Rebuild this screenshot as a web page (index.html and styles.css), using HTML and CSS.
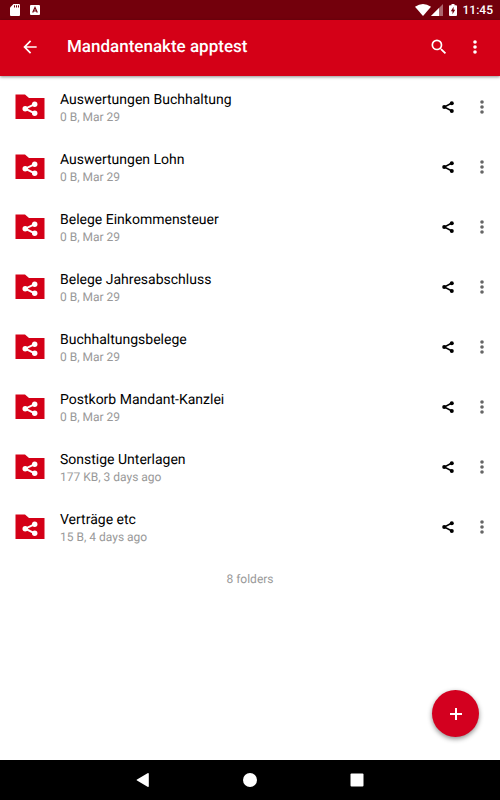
FILE: index.html
```
<!DOCTYPE html>
<html lang="de">
<head>
<meta charset="utf-8">
<meta name="viewport" content="width=device-width, initial-scale=1">
<title>Mandantenakte apptest</title>
<link rel="stylesheet" href="styles.css">
</head>
<body>
<svg class="defs" aria-hidden="true">
  <symbol id="more" viewBox="0 0 20 20"><circle cx="10" cy="5" r="1.8"/><circle cx="10" cy="10" r="1.8"/><circle cx="10" cy="15" r="1.8"/></symbol>
  <symbol id="share" viewBox="0 0 20 20"><path d="M14 6 6.200 10 14 14" fill="none" stroke="currentColor" stroke-width="1.500"/><circle cx="6.200" cy="10" r="2"/><circle cx="13.800" cy="6.200" r="2"/><circle cx="13.800" cy="13.900" r="2"/></symbol>
  <symbol id="folder" viewBox="0 0 30 26"><path fill="#d40017" d="M.5.500H10l4 3.500h15.500v21H.5z"/><path d="M19.800 10.200 10.300 14.700l9.500 4.600" fill="none" stroke="#fff" stroke-width="2"/><g fill="#fff"><circle cx="10.200" cy="14.700" r="2.700"/><circle cx="19.700" cy="10.300" r="2.700"/><circle cx="19.700" cy="19.300" r="2.700"/></g></symbol>
</svg>
<div class="app">
  <div class="status">
    <div class="group">
      <svg width="10" height="12" viewBox="0 0 10 12"><path fill="#fff" d="M3.500 0H9q1 0 1 1v10q0 1-1 1H1q-1 0-1-1V3.500z"/><path stroke="#73000c" stroke-width="1" d="M4.500 1.300v2.200M6.500 1.300v2.200M8.500 1.300v2.200"/></svg>
      <svg width="10" height="10" viewBox="0 0 10 10"><rect width="10" height="10" rx="1" fill="#fff"/><path fill="none" stroke="#73000c" stroke-width="1.200" d="M2.700 7.500 5 2.500l2.300 5M3.500 6h3"/></svg>
    </div>
    <div class="group right">
      <div class="signals">
        <svg width="16" height="12" viewBox="0 0 16 12"><path fill="#fff" d="M0 2.800Q8-2.600 16 2.800L8 12z"/></svg>
        <svg width="12" height="12" viewBox="0 0 12 12"><path fill="#fff" opacity=".4" d="M12 0v12H0z"/><path fill="#fff" d="M8 4v8H0z"/></svg>
      </div>
      <svg width="8" height="12" viewBox="0 0 8 12"><path fill="#fff" d="M2.500 0h3v1.200H7q1 0 1 1V11q0 1-1 1H1q-1 0-1-1V2.200q0-1 1-1h1.500z"/><path fill="#73000c" d="M4.600 2.800 1.800 7.200h1.700v3l2.700-4.400H4.600z"/></svg>
      <span class="time">11:45</span>
    </div>
  </div>
  <header class="bar">
    <button class="icon" aria-label="Back"><svg width="20" height="20" viewBox="0 0 24 24"><path d="M20 11H7.830l5.590-5.590L12 4l-8 8 8 8 1.410-1.410L7.830 13H20z"/></svg></button>
    <h1>Mandantenakte apptest</h1>
    <button class="icon" aria-label="Search"><svg width="20" height="20" viewBox="0 0 24 24"><path d="M15.500 14h-.79l-.28-.27A6.471 6.471 0 0 0 16 9.500 6.500 6.500 0 1 0 9.500 16c1.610 0 3.090-.59 4.230-1.570l.27.28v.79l5 4.990L20.490 19zm-6 0C7.010 14 5 11.990 5 9.500S7.010 5 9.500 5 14 7.010 14 9.500 11.990 14 9.500 14z"/></svg></button>
    <button class="icon" aria-label="More options"><svg width="20" height="20"><use href="#more"/></svg></button>
  </header>
  <main>
    <ul class="list">
      <li><svg class="folder"><use href="#folder"/></svg><div class="text"><p class="name">Auswertungen Buchhaltung</p><p class="meta">0 B, Mar 29</p></div><button class="act" aria-label="Share"><svg><use href="#share"/></svg></button><button class="act dots" aria-label="More"><svg><use href="#more"/></svg></button></li>
      <li><svg class="folder"><use href="#folder"/></svg><div class="text"><p class="name">Auswertungen Lohn</p><p class="meta">0 B, Mar 29</p></div><button class="act" aria-label="Share"><svg><use href="#share"/></svg></button><button class="act dots" aria-label="More"><svg><use href="#more"/></svg></button></li>
      <li><svg class="folder"><use href="#folder"/></svg><div class="text"><p class="name">Belege Einkommensteuer</p><p class="meta">0 B, Mar 29</p></div><button class="act" aria-label="Share"><svg><use href="#share"/></svg></button><button class="act dots" aria-label="More"><svg><use href="#more"/></svg></button></li>
      <li><svg class="folder"><use href="#folder"/></svg><div class="text"><p class="name">Belege Jahresabschluss</p><p class="meta">0 B, Mar 29</p></div><button class="act" aria-label="Share"><svg><use href="#share"/></svg></button><button class="act dots" aria-label="More"><svg><use href="#more"/></svg></button></li>
      <li><svg class="folder"><use href="#folder"/></svg><div class="text"><p class="name">Buchhaltungsbelege</p><p class="meta">0 B, Mar 29</p></div><button class="act" aria-label="Share"><svg><use href="#share"/></svg></button><button class="act dots" aria-label="More"><svg><use href="#more"/></svg></button></li>
      <li><svg class="folder"><use href="#folder"/></svg><div class="text"><p class="name">Postkorb Mandant-Kanzlei</p><p class="meta">0 B, Mar 29</p></div><button class="act" aria-label="Share"><svg><use href="#share"/></svg></button><button class="act dots" aria-label="More"><svg><use href="#more"/></svg></button></li>
      <li><svg class="folder"><use href="#folder"/></svg><div class="text"><p class="name">Sonstige Unterlagen</p><p class="meta">177 KB, 3 days ago</p></div><button class="act" aria-label="Share"><svg><use href="#share"/></svg></button><button class="act dots" aria-label="More"><svg><use href="#more"/></svg></button></li>
      <li><svg class="folder"><use href="#folder"/></svg><div class="text"><p class="name">Verträge etc</p><p class="meta">15 B, 4 days ago</p></div><button class="act" aria-label="Share"><svg><use href="#share"/></svg></button><button class="act dots" aria-label="More"><svg><use href="#more"/></svg></button></li>
    </ul>
    <p class="count">8 folders</p>
    <button class="fab" aria-label="Add"><svg width="20" height="20" viewBox="0 0 20 20"><path fill="none" stroke="#fff" stroke-width="2" d="M10 4v12M4 10h12"/></svg></button>
  </main>
  <nav class="sysnav" aria-label="System">
    <button aria-label="Back"><svg width="14" height="14" viewBox="0 0 14 14"><path d="M1 6.400 11.500.2q1.300-.5 1.300.8v12q0 1.300-1.300.8L1 7.600q-.8-.6 0-1.200z"/></svg></button>
    <button aria-label="Home"><svg width="14" height="14" viewBox="0 0 14 14"><circle cx="7" cy="7" r="7"/></svg></button>
    <button aria-label="Overview"><svg width="14" height="14" viewBox="0 0 14 14"><rect x=".5" y=".5" width="13" height="13" rx="1"/></svg></button>
  </nav>
</div>
</body>
</html>
```
FILE: styles.css
```
* { box-sizing: border-box; }
body { margin: 0; background: #fff; color: #000; font-family: Roboto, sans-serif; text-rendering: geometricPrecision; }
h1, p, ul { margin: 0; padding: 0; }
button { display: flex; align-items: center; justify-content: center; padding: 0; border: 0; background: none; color: inherit; }
svg { display: block; flex: none; fill: currentColor; }
.defs { position: absolute; width: 0; height: 0; }
.app { display: flex; flex-direction: column; min-height: 100vh; }

.status { display: flex; justify-content: space-between; align-items: center; height: 20px; padding: 0 7px 0 10px; background: #73000c; color: #fff; }
.group { display: flex; align-items: center; gap: 10px; }
.right { gap: 6px; }
.signals { display: flex; }
.time { font-size: 12px; line-height: 20px; font-weight: 500; }

.bar { display: flex; align-items: center; height: 56px; padding: 0 7px 2px 12px; background: #d40017; color: #fff; box-shadow: 0 1px 3px rgba(0, 0, 0, .45); }
.icon { width: 36px; height: 36px; }
.bar h1 { flex: 1; padding-left: 19px; font-size: 17px; line-height: 24px; font-weight: 500; }

main { position: relative; flex: 1; padding-top: 1px; }
.list { list-style: none; }
.list li { display: flex; align-items: center; height: 60px; padding: 0 1px 0 15px; }
.folder { width: 30px; height: 26px; }
.text { flex: 1; padding: 2px 0 0 15px; }
.name { font-size: 14px; line-height: 18px; }
.meta { font-size: 12px; line-height: 16px; color: #999; }
.act { width: 34px; height: 34px; }
.act svg { width: 20px; height: 20px; }
.dots { color: #666; }
.count { padding-top: 14px; font-size: 12px; line-height: 16px; color: #999; text-align: center; }
.fab { position: absolute; right: 21px; bottom: 23px; width: 47px; height: 47px; border-radius: 50%; background: #d3001f; box-shadow: 0 2px 5px rgba(0, 0, 0, .45); }

.sysnav { display: flex; align-items: center; justify-content: center; gap: 53px; height: 40px; background: #000; color: #fff; }
.sysnav button { width: 54px; height: 40px; }
```
